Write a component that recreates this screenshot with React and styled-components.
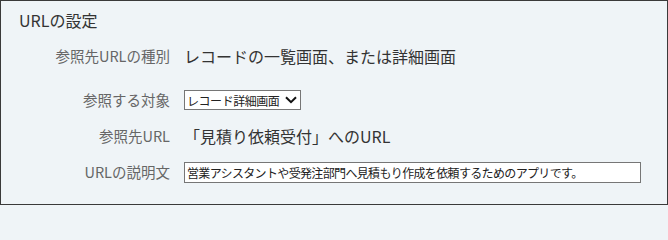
import React from "react";
import styled, { createGlobalStyle } from "styled-components";

const GlobalStyle = createGlobalStyle`
  html, body { margin: 0; padding: 0; background: #eff4f7; }
  body { font-family: "Noto Sans CJK JP", "Noto Sans", sans-serif; }
`;

const Panel = styled.section`
  box-sizing: border-box;
  width: 668px;
  height: 205px;
  border: 1px solid #3a3a3a;
  background: #eff4f7;
  padding: 7px 0 0 18px;
  display: flex;
  flex-direction: column;
`;

const Title = styled.h2`
  margin: 0 0 6px 0;
  font-size: 16px;
  line-height: 24px;
  font-weight: 400;
  color: #333;
`;

const Form = styled.div`
  display: grid;
  grid-template-columns: 151px 1fr;
  grid-template-rows: 36px 8px 36px 36px 36px;
  column-gap: 14px;
  align-items: center;
`;

const Label = styled.div`
  font-size: 14.5px;
  color: #666;
  text-align: right;
  line-height: 20px;
`;

const Value = styled.div`
  font-size: 16px;
  color: #333;
  line-height: 22px;
`;

const Spacer = styled.div`
  grid-column: 1 / -1;
  height: 8px;
`;

const SelectWrap = styled.div`
  position: relative;
  width: 117px;
  height: 20px;
`;

const Select = styled.select`
  appearance: none;
  -webkit-appearance: none;
  box-sizing: border-box;
  display: block;
  width: 117px;
  height: 20px;
  border: 1px solid #767676;
  border-radius: 0;
  background: #fff;
  padding: 0 0 0 2px;
  margin: 0;
  font-family: "Noto Sans CJK JP", sans-serif;
  font-size: 12px;
  letter-spacing: -0.45px;
  color: #222;
  outline: none;
`;

const Chevron = styled.svg`
  position: absolute;
  right: 4px;
  top: 6px;
  width: 12px;
  height: 8px;
  pointer-events: none;
`;

const TextInput = styled.input`
  box-sizing: border-box;
  display: block;
  width: 457px;
  height: 21px;
  border: 1px solid #767676;
  border-radius: 0;
  background: #fff;
  padding: 0 2px;
  margin: 0;
  font-family: "Noto Sans CJK JP", sans-serif;
  font-size: 12px;
  letter-spacing: -0.65px;
  color: #222;
  outline: none;
`;

export default function App() {
  return (
    <>
      <GlobalStyle />
      <Panel>
        <Title>URLの設定</Title>
        <Form>
          <Label>参照先URLの種別</Label>
          <Value>レコードの一覧画面、または詳細画面</Value>
          <Spacer />
          <Label>参照する対象</Label>
          <div>
            <SelectWrap>
              <Select defaultValue="detail">
                <option value="detail">レコード詳細画面</option>
                <option value="list">レコード一覧画面</option>
              </Select>
              <Chevron viewBox="0 0 12 8">
                <path d="M1 1.2 L6 6.2 L11 1.2" fill="none" stroke="#111" strokeWidth="2" />
              </Chevron>
            </SelectWrap>
          </div>
          <Label>参照先URL</Label>
          <Value>「見積り依頼受付」へのURL</Value>
          <Label>URLの説明文</Label>
          <div>
            <TextInput
              type="text"
              defaultValue="営業アシスタントや受発注部門へ見積もり作成を依頼するためのアプリです。"
            />
          </div>
        </Form>
      </Panel>
    </>
  );
}
